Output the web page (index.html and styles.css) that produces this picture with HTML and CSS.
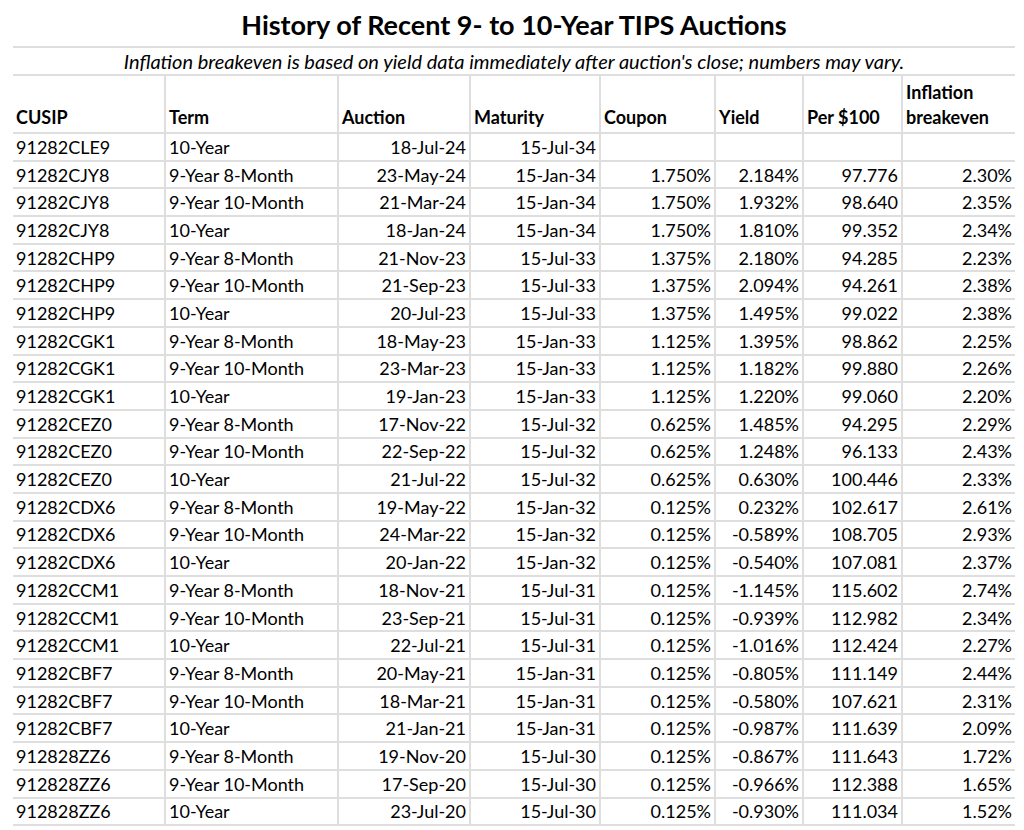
FILE: index.html
```html
<!DOCTYPE html>
<html lang="en">
<head>
<meta charset="utf-8">
<title>History of Recent 9- to 10-Year TIPS Auctions</title>
<link rel="stylesheet" href="styles.css">
</head>
<body>
<div class="sheet">
  <h1 class="title">History of Recent 9- to 10-Year TIPS Auctions</h1>
  <p class="note">Inflation breakeven is based on yield data immediately after auction's close; numbers may vary.</p>
  <table class="auctions">
    <colgroup>
      <col class="c-cusip"><col class="c-term"><col class="c-auction"><col class="c-maturity">
      <col class="c-coupon"><col class="c-yield"><col class="c-price"><col class="c-be">
    </colgroup>
    <thead>
      <tr>
        <th>CUSIP</th><th>Term</th><th>Auction</th><th>Maturity</th><th>Coupon</th><th>Yield</th><th>Per $100</th><th>Inflation<br>breakeven</th>
      </tr>
    </thead>
    <tbody>
      <tr><td>91282CLE9</td><td>10-Year</td><td class="r">18-Jul-24</td><td class="r">15-Jul-34</td><td class="r"></td><td class="r"></td><td class="r"></td><td class="r"></td></tr>
      <tr><td>91282CJY8</td><td>9-Year 8-Month</td><td class="r">23-May-24</td><td class="r">15-Jan-34</td><td class="r">1.750%</td><td class="r">2.184%</td><td class="r">97.776</td><td class="r">2.30%</td></tr>
      <tr><td>91282CJY8</td><td>9-Year 10-Month</td><td class="r">21-Mar-24</td><td class="r">15-Jan-34</td><td class="r">1.750%</td><td class="r">1.932%</td><td class="r">98.640</td><td class="r">2.35%</td></tr>
      <tr><td>91282CJY8</td><td>10-Year</td><td class="r">18-Jan-24</td><td class="r">15-Jan-34</td><td class="r">1.750%</td><td class="r">1.810%</td><td class="r">99.352</td><td class="r">2.34%</td></tr>
      <tr><td>91282CHP9</td><td>9-Year 8-Month</td><td class="r">21-Nov-23</td><td class="r">15-Jul-33</td><td class="r">1.375%</td><td class="r">2.180%</td><td class="r">94.285</td><td class="r">2.23%</td></tr>
      <tr><td>91282CHP9</td><td>9-Year 10-Month</td><td class="r">21-Sep-23</td><td class="r">15-Jul-33</td><td class="r">1.375%</td><td class="r">2.094%</td><td class="r">94.261</td><td class="r">2.38%</td></tr>
      <tr><td>91282CHP9</td><td>10-Year</td><td class="r">20-Jul-23</td><td class="r">15-Jul-33</td><td class="r">1.375%</td><td class="r">1.495%</td><td class="r">99.022</td><td class="r">2.38%</td></tr>
      <tr><td>91282CGK1</td><td>9-Year 8-Month</td><td class="r">18-May-23</td><td class="r">15-Jan-33</td><td class="r">1.125%</td><td class="r">1.395%</td><td class="r">98.862</td><td class="r">2.25%</td></tr>
      <tr><td>91282CGK1</td><td>9-Year 10-Month</td><td class="r">23-Mar-23</td><td class="r">15-Jan-33</td><td class="r">1.125%</td><td class="r">1.182%</td><td class="r">99.880</td><td class="r">2.26%</td></tr>
      <tr><td>91282CGK1</td><td>10-Year</td><td class="r">19-Jan-23</td><td class="r">15-Jan-33</td><td class="r">1.125%</td><td class="r">1.220%</td><td class="r">99.060</td><td class="r">2.20%</td></tr>
      <tr><td>91282CEZ0</td><td>9-Year 8-Month</td><td class="r">17-Nov-22</td><td class="r">15-Jul-32</td><td class="r">0.625%</td><td class="r">1.485%</td><td class="r">94.295</td><td class="r">2.29%</td></tr>
      <tr><td>91282CEZ0</td><td>9-Year 10-Month</td><td class="r">22-Sep-22</td><td class="r">15-Jul-32</td><td class="r">0.625%</td><td class="r">1.248%</td><td class="r">96.133</td><td class="r">2.43%</td></tr>
      <tr><td>91282CEZ0</td><td>10-Year</td><td class="r">21-Jul-22</td><td class="r">15-Jul-32</td><td class="r">0.625%</td><td class="r">0.630%</td><td class="r">100.446</td><td class="r">2.33%</td></tr>
      <tr><td>91282CDX6</td><td>9-Year 8-Month</td><td class="r">19-May-22</td><td class="r">15-Jan-32</td><td class="r">0.125%</td><td class="r">0.232%</td><td class="r">102.617</td><td class="r">2.61%</td></tr>
      <tr><td>91282CDX6</td><td>9-Year 10-Month</td><td class="r">24-Mar-22</td><td class="r">15-Jan-32</td><td class="r">0.125%</td><td class="r">-0.589%</td><td class="r">108.705</td><td class="r">2.93%</td></tr>
      <tr><td>91282CDX6</td><td>10-Year</td><td class="r">20-Jan-22</td><td class="r">15-Jan-32</td><td class="r">0.125%</td><td class="r">-0.540%</td><td class="r">107.081</td><td class="r">2.37%</td></tr>
      <tr><td>91282CCM1</td><td>9-Year 8-Month</td><td class="r">18-Nov-21</td><td class="r">15-Jul-31</td><td class="r">0.125%</td><td class="r">-1.145%</td><td class="r">115.602</td><td class="r">2.74%</td></tr>
      <tr><td>91282CCM1</td><td>9-Year 10-Month</td><td class="r">23-Sep-21</td><td class="r">15-Jul-31</td><td class="r">0.125%</td><td class="r">-0.939%</td><td class="r">112.982</td><td class="r">2.34%</td></tr>
      <tr><td>91282CCM1</td><td>10-Year</td><td class="r">22-Jul-21</td><td class="r">15-Jul-31</td><td class="r">0.125%</td><td class="r">-1.016%</td><td class="r">112.424</td><td class="r">2.27%</td></tr>
      <tr><td>91282CBF7</td><td>9-Year 8-Month</td><td class="r">20-May-21</td><td class="r">15-Jan-31</td><td class="r">0.125%</td><td class="r">-0.805%</td><td class="r">111.149</td><td class="r">2.44%</td></tr>
      <tr><td>91282CBF7</td><td>9-Year 10-Month</td><td class="r">18-Mar-21</td><td class="r">15-Jan-31</td><td class="r">0.125%</td><td class="r">-0.580%</td><td class="r">107.621</td><td class="r">2.31%</td></tr>
      <tr><td>91282CBF7</td><td>10-Year</td><td class="r">21-Jan-21</td><td class="r">15-Jan-31</td><td class="r">0.125%</td><td class="r">-0.987%</td><td class="r">111.639</td><td class="r">2.09%</td></tr>
      <tr><td>912828ZZ6</td><td>9-Year 8-Month</td><td class="r">19-Nov-20</td><td class="r">15-Jul-30</td><td class="r">0.125%</td><td class="r">-0.867%</td><td class="r">111.643</td><td class="r">1.72%</td></tr>
      <tr><td>912828ZZ6</td><td>9-Year 10-Month</td><td class="r">17-Sep-20</td><td class="r">15-Jul-30</td><td class="r">0.125%</td><td class="r">-0.966%</td><td class="r">112.388</td><td class="r">1.65%</td></tr>
      <tr><td>912828ZZ6</td><td>10-Year</td><td class="r">23-Jul-20</td><td class="r">15-Jul-30</td><td class="r">0.125%</td><td class="r">-0.930%</td><td class="r">111.034</td><td class="r">1.52%</td></tr>
    </tbody>
  </table>
</div>
</body>
</html>
```

FILE: styles.css
```css
html, body {
  margin: 0;
  padding: 0;
  background: #ffffff;
}

body {
  font-family: Lato, "Liberation Sans", sans-serif;
  color: #000000;
}

.sheet {
  width: 1002px;
  margin-left: 13px;
}

.title {
  margin: 0;
  height: 48px;
  box-sizing: border-box;
  padding-top: 9px;
  font-size: 27px;
  line-height: 32px;
  font-weight: 700;
  text-align: center;
  border-bottom: 2px solid #dedede;
}

.note {
  margin: 0;
  height: 28px;
  box-sizing: border-box;
  padding-top: 1px;
  font-size: 20px;
  line-height: 24px;
  font-style: italic;
  text-align: center;
  border-bottom: 2px solid #dedede;
}

.auctions {
  width: 1002px;
  table-layout: fixed;
  border-collapse: collapse;
  font-size: 18px;
}

.c-cusip { width: 152px; }
.c-term { width: 173px; }
.c-auction { width: 132px; }
.c-maturity { width: 130px; }
.c-coupon { width: 115px; }
.c-yield { width: 88px; }
.c-price { width: 99px; }
.c-be { width: 113px; }

.auctions th,
.auctions td {
  border-left: 2px solid #dedede;
  border-bottom: 2px solid #dedede;
  padding: 0 3px 0 3px;
  white-space: nowrap;
  overflow: hidden;
}

.auctions th:first-child,
.auctions td:first-child {
  border-left: none;
}

.auctions th {
  height: 54px;
  padding-bottom: 2px;
  text-align: left;
  vertical-align: bottom;
  font-weight: 700;
  line-height: 25px;
}

.auctions td {
  height: 25.7px;
  line-height: 22px;
  vertical-align: middle;
}

.auctions td.r {
  text-align: right;
}
```
